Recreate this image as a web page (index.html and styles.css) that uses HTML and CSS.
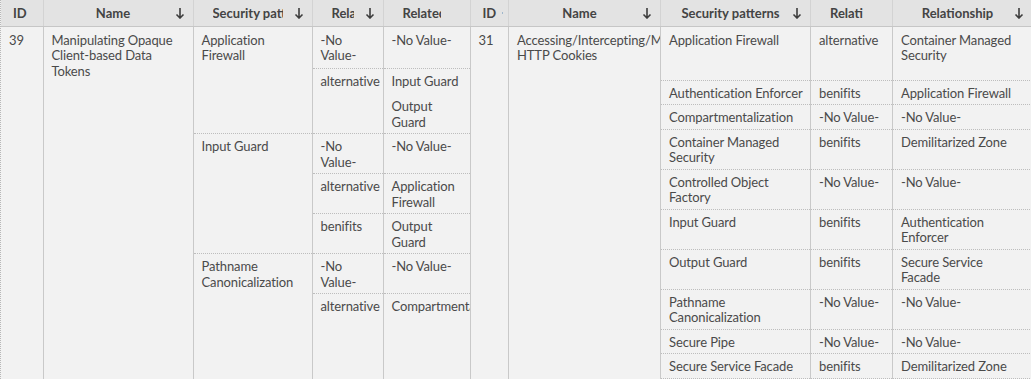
FILE: index.html
```html
<!DOCTYPE html>
<html lang="en">
<head>
<meta charset="utf-8">
<title>Attack patterns</title>
<link rel="stylesheet" href="styles.css">
</head>
<body>
<div class="page">
  <table class="grid grid-left">
    <colgroup>
      <col class="w-id-l"><col class="w-name-l"><col class="w-sp-l"><col class="w-rel-l"><col class="w-related-l">
    </colgroup>
    <thead>
      <tr>
        <th class="th-id"><span class="lbl-id">ID</span></th>
        <th><div class="hd"><span class="lbl">Name</span><svg class="sort" viewBox="0 0 10 12"><path d="M5 1V11M1.5 7.5L5 11L8.5 7.5"/></svg></div></th>
        <th><div class="hd"><span class="lbl">Security patterns</span><svg class="sort" viewBox="0 0 10 12"><path d="M5 1V11M1.5 7.5L5 11L8.5 7.5"/></svg></div></th>
        <th><div class="hd"><span class="lbl">Relationship</span><svg class="sort" viewBox="0 0 10 12"><path d="M5 1V11M1.5 7.5L5 11L8.5 7.5"/></svg></div></th>
        <th><div class="hd"><span class="lbl">Related patterns</span><svg class="sort ghost" viewBox="0 0 10 12"><path d="M5 1V11M1.5 7.5L5 11L8.5 7.5"/></svg></div></th>
      </tr>
    </thead>
    <tbody>
      <tr class="first">
        <td class="span" rowspan="7">39</td>
        <td class="span" rowspan="7">Manipulating Opaque Client-based Data Tokens</td>
        <td class="sp" rowspan="2">Application Firewall</td>
        <td class="sub">-No Value-</td>
        <td class="sub">-No Value-</td>
      </tr>
      <tr>
        <td class="sub">alternative</td>
        <td class="sub"><div class="item">Input Guard</div><div class="item">Output Guard</div></td>
      </tr>
      <tr>
        <td class="sp" rowspan="3">Input Guard</td>
        <td class="sub">-No Value-</td>
        <td class="sub">-No Value-</td>
      </tr>
      <tr>
        <td class="sub">alternative</td>
        <td class="sub">Application Firewall</td>
      </tr>
      <tr>
        <td class="sub">benifits</td>
        <td class="sub">Output Guard</td>
      </tr>
      <tr>
        <td class="sp" rowspan="2">Pathname Canonicalization</td>
        <td class="sub">-No Value-</td>
        <td class="sub">-No Value-</td>
      </tr>
      <tr class="tail">
        <td class="sub">alternative</td>
        <td class="sub nowrap">Compartmentalization</td>
      </tr>
    </tbody>
  </table>

  <table class="grid grid-right">
    <colgroup>
      <col class="w-id-r"><col class="w-name-r"><col class="w-sp-r"><col class="w-rel-r"><col class="w-related-r">
    </colgroup>
    <thead>
      <tr>
        <th class="th-id"><span class="lbl-id">ID</span><span class="handle"></span></th>
        <th><div class="hd"><span class="lbl">Name</span><svg class="sort" viewBox="0 0 10 12"><path d="M5 1V11M1.5 7.5L5 11L8.5 7.5"/></svg></div></th>
        <th><div class="hd"><span class="lbl">Security patterns</span><svg class="sort" viewBox="0 0 10 12"><path d="M5 1V11M1.5 7.5L5 11L8.5 7.5"/></svg></div></th>
        <th><div class="hd"><span class="lbl">Relationship</span><svg class="sort ghost" viewBox="0 0 10 12"><path d="M5 1V11M1.5 7.5L5 11L8.5 7.5"/></svg></div></th>
        <th><div class="hd"><span class="lbl">Relationship</span><svg class="sort" viewBox="0 0 10 12"><path d="M5 1V11M1.5 7.5L5 11L8.5 7.5"/></svg></div></th>
      </tr>
    </thead>
    <tbody>
      <tr class="first tall">
        <td class="span" rowspan="11">31</td>
        <td class="span" rowspan="11">Accessing/Intercepting/Modifying HTTP Cookies</td>
        <td class="sp">Application Firewall</td>
        <td class="sub">alternative</td>
        <td class="sub">Container Managed Security</td>
      </tr>
      <tr><td class="sp">Authentication Enforcer</td><td class="sub">benifits</td><td class="sub">Application Firewall</td></tr>
      <tr><td class="sp">Compartmentalization</td><td class="sub">-No Value-</td><td class="sub">-No Value-</td></tr>
      <tr><td class="sp">Container Managed Security</td><td class="sub">benifits</td><td class="sub">Demilitarized Zone</td></tr>
      <tr><td class="sp">Controlled Object Factory</td><td class="sub">-No Value-</td><td class="sub">-No Value-</td></tr>
      <tr><td class="sp">Input Guard</td><td class="sub">benifits</td><td class="sub">Authentication Enforcer</td></tr>
      <tr><td class="sp">Output Guard</td><td class="sub">benifits</td><td class="sub">Secure Service Facade</td></tr>
      <tr><td class="sp">Pathname Canonicalization</td><td class="sub">-No Value-</td><td class="sub">-No Value-</td></tr>
      <tr><td class="sp">Secure Pipe</td><td class="sub">-No Value-</td><td class="sub">-No Value-</td></tr>
      <tr><td class="sp">Secure Service Facade</td><td class="sub">benifits</td><td class="sub">Demilitarized Zone</td></tr>
      <tr><td class="sp">Single Access Point</td><td class="sub">benifits</td><td class="sub">Input Guard</td></tr>
    </tbody>
  </table>
</div>
</body>
</html>
```
FILE: styles.css
```css
* { box-sizing: border-box; }

body {
  margin: 0;
  background: #f2f2f2;
  font-family: Lato, "Open Sans", Arial, sans-serif;
  font-size: 13px;
  color: #4a4a4a;
}

.page {
  display: flex;
  align-items: flex-start;
  height: 379px;
  overflow: hidden;
  border-left: 1px dotted #b8b8b8;
}

.grid {
  flex: none;
  border-collapse: collapse;
  table-layout: fixed;
}

.grid-left { width: 469px; }
.grid-right { width: 562px; }

.w-id-l { width: 42px; }
.w-name-l { width: 150px; }
.w-sp-l { width: 119px; }
.w-rel-l { width: 71px; }
.w-related-l { width: 87px; }

.w-id-r { width: 38px; }
.w-name-r { width: 152px; }
.w-sp-r { width: 150px; }
.w-rel-r { width: 82px; }
.w-related-r { width: 140px; }

th {
  height: 26px;
  padding: 0 8px;
  background: #e3e3e3;
  border-right: 1px solid #d3d3d3;
  border-bottom: 1px solid #c6c6c6;
  font-weight: 700;
  color: #444;
  text-align: left;
  vertical-align: middle;
  white-space: nowrap;
  overflow: hidden;
}

.th-id { padding-left: 12px; position: relative; }

.hd {
  display: flex;
  align-items: center;
}

.lbl {
  flex: 1;
  min-width: 0;
  overflow: hidden;
  white-space: nowrap;
  text-align: center;
  margin: 0 11px;
}

.sort {
  flex: none;
  width: 10px;
  height: 12px;
  fill: none;
  stroke: #3d3d3d;
  stroke-width: 1.6;
}

.ghost { visibility: hidden; }

.handle {
  position: absolute;
  right: 5px;
  top: 12px;
  width: 1px;
  height: 2px;
  background: #9fb7cc;
}

td {
  padding: 5px 3px 3px 8px;
  line-height: 15.5px;
  letter-spacing: -0.12px;
  vertical-align: top;
  overflow: hidden;
  border-right: 1px solid #c9c9c9;
}

.grid-right td:last-child { padding-right: 14px; }

.sp, .sub { border-bottom: 1px dotted #bdbdbd; }

.first td { padding-top: 6px; padding-bottom: 4px; }
.tall td { padding-bottom: 16px; }
.tail td { padding-bottom: 120px; border-bottom: none; }

.item + .item { margin-top: 10px; }

.nowrap { white-space: nowrap; }
```
